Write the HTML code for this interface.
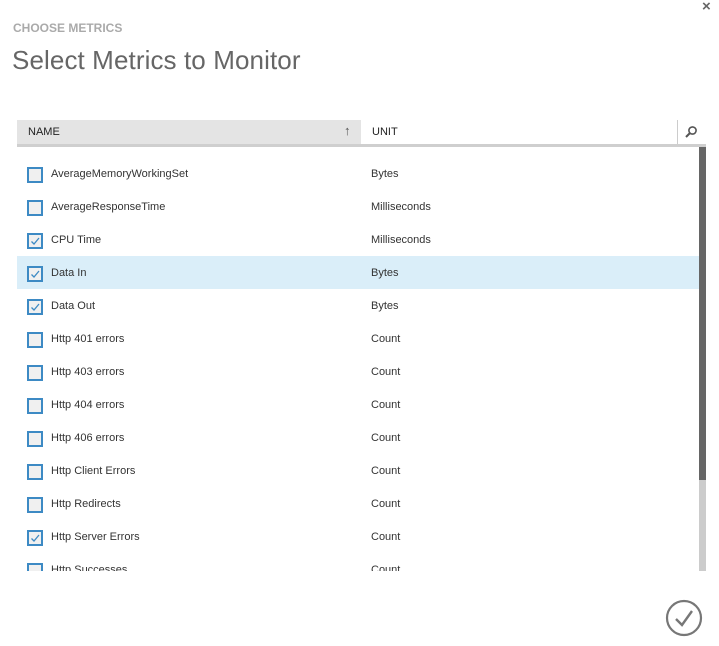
<!DOCTYPE html>
<html><head><style>
body{margin:0;width:719px;height:646px;background:#fff;position:relative;overflow:hidden;font-family:"Liberation Sans",sans-serif}
.a{position:absolute}
.row{position:absolute;left:0;width:682px;height:32px;font-size:11px;color:#333}
.row .n{position:absolute;left:34px;top:10px}
.row .u{position:absolute;left:354px;top:10px}
.cb{position:absolute;left:10px;top:9px;width:12px;height:12px;border:2px solid #3d8ac4;background:#f0f0f0}
.cb svg{position:absolute;left:0;top:0}
</style></head><body>
<div class="a" style="left:13px;top:21px;font-size:12px;font-weight:bold;color:#aaa">CHOOSE METRICS</div>
<div class="a" style="left:12px;top:45px;font-size:26px;color:#666;letter-spacing:0.1px">Select Metrics to Monitor</div>
<div class="a" style="left:702px;top:-2px;font-size:15px;font-weight:bold;color:#666">×</div>
<div class="a" style="left:17px;top:120px;width:344px;height:24px;background:#e4e4e4"></div>
<div class="a" style="left:17px;top:144px;width:689px;height:3px;background:#cfcfcf"></div>
<div class="a" style="left:28px;top:126px;font-size:11px;color:#222">NAME</div>
<div class="a" style="left:344px;top:123px;font-size:13px;color:#555">↑</div>
<div class="a" style="left:372px;top:126px;font-size:11px;color:#222">UNIT</div>
<div class="a" style="left:677px;top:120px;width:1px;height:24px;background:#ccc"></div>
<svg class="a" style="left:684px;top:125px" width="14" height="14"><circle cx="8.5" cy="5.5" r="3.6" fill="none" stroke="#555" stroke-width="1.6"/><line x1="6" y1="8" x2="2" y2="12" stroke="#555" stroke-width="2"/></svg>
<div class="a" style="left:699px;top:147px;width:7px;height:333px;background:#666"></div>
<div class="a" style="left:699px;top:480px;width:7px;height:91px;background:#ccc"></div>
<div class="a" style="left:17px;top:147px;width:682px;height:424px;overflow:hidden">
<div style="position:relative;top:-147px">
<div class="row" style="top:158px"><div class="cb"></div><span class="n">AverageMemoryWorkingSet</span><span class="u">Bytes</span></div>
<div class="row" style="top:191px"><div class="cb"></div><span class="n">AverageResponseTime</span><span class="u">Milliseconds</span></div>
<div class="row" style="top:224px"><div class="cb"><svg width="12" height="12"><path d="M2.5 6.5L5 9L10 3" fill="none" stroke="#3d8ac4" stroke-width="1.3"/></svg></div><span class="n">CPU Time</span><span class="u">Milliseconds</span></div>
<div class="row" style="top:256px;height:33px;background:#daeef9"><div class="cb" style="top:10px"><svg width="12" height="12"><path d="M2.5 6.5L5 9L10 3" fill="none" stroke="#3d8ac4" stroke-width="1.3"/></svg></div><span class="n" style="top:11px">Data In</span><span class="u" style="top:11px">Bytes</span></div>
<div class="row" style="top:290px"><div class="cb"><svg width="12" height="12"><path d="M2.5 6.5L5 9L10 3" fill="none" stroke="#3d8ac4" stroke-width="1.3"/></svg></div><span class="n">Data Out</span><span class="u">Bytes</span></div>
<div class="row" style="top:323px"><div class="cb"></div><span class="n">Http 401 errors</span><span class="u">Count</span></div>
<div class="row" style="top:356px"><div class="cb"></div><span class="n">Http 403 errors</span><span class="u">Count</span></div>
<div class="row" style="top:389px"><div class="cb"></div><span class="n">Http 404 errors</span><span class="u">Count</span></div>
<div class="row" style="top:422px"><div class="cb"></div><span class="n">Http 406 errors</span><span class="u">Count</span></div>
<div class="row" style="top:455px"><div class="cb"></div><span class="n">Http Client Errors</span><span class="u">Count</span></div>
<div class="row" style="top:488px"><div class="cb"></div><span class="n">Http Redirects</span><span class="u">Count</span></div>
<div class="row" style="top:521px"><div class="cb"><svg width="12" height="12"><path d="M2.5 6.5L5 9L10 3" fill="none" stroke="#3d8ac4" stroke-width="1.3"/></svg></div><span class="n">Http Server Errors</span><span class="u">Count</span></div>
<div class="row" style="top:554px"><div class="cb"></div><span class="n">Http Successes</span><span class="u">Count</span></div>
</div></div>
<svg class="a" style="left:665px;top:599px" width="38" height="38"><circle cx="19" cy="19" r="17" fill="none" stroke="#777" stroke-width="2.2"/><path d="M11 20L17 26L27 12" fill="none" stroke="#777" stroke-width="2.4"/></svg>
</body></html>
